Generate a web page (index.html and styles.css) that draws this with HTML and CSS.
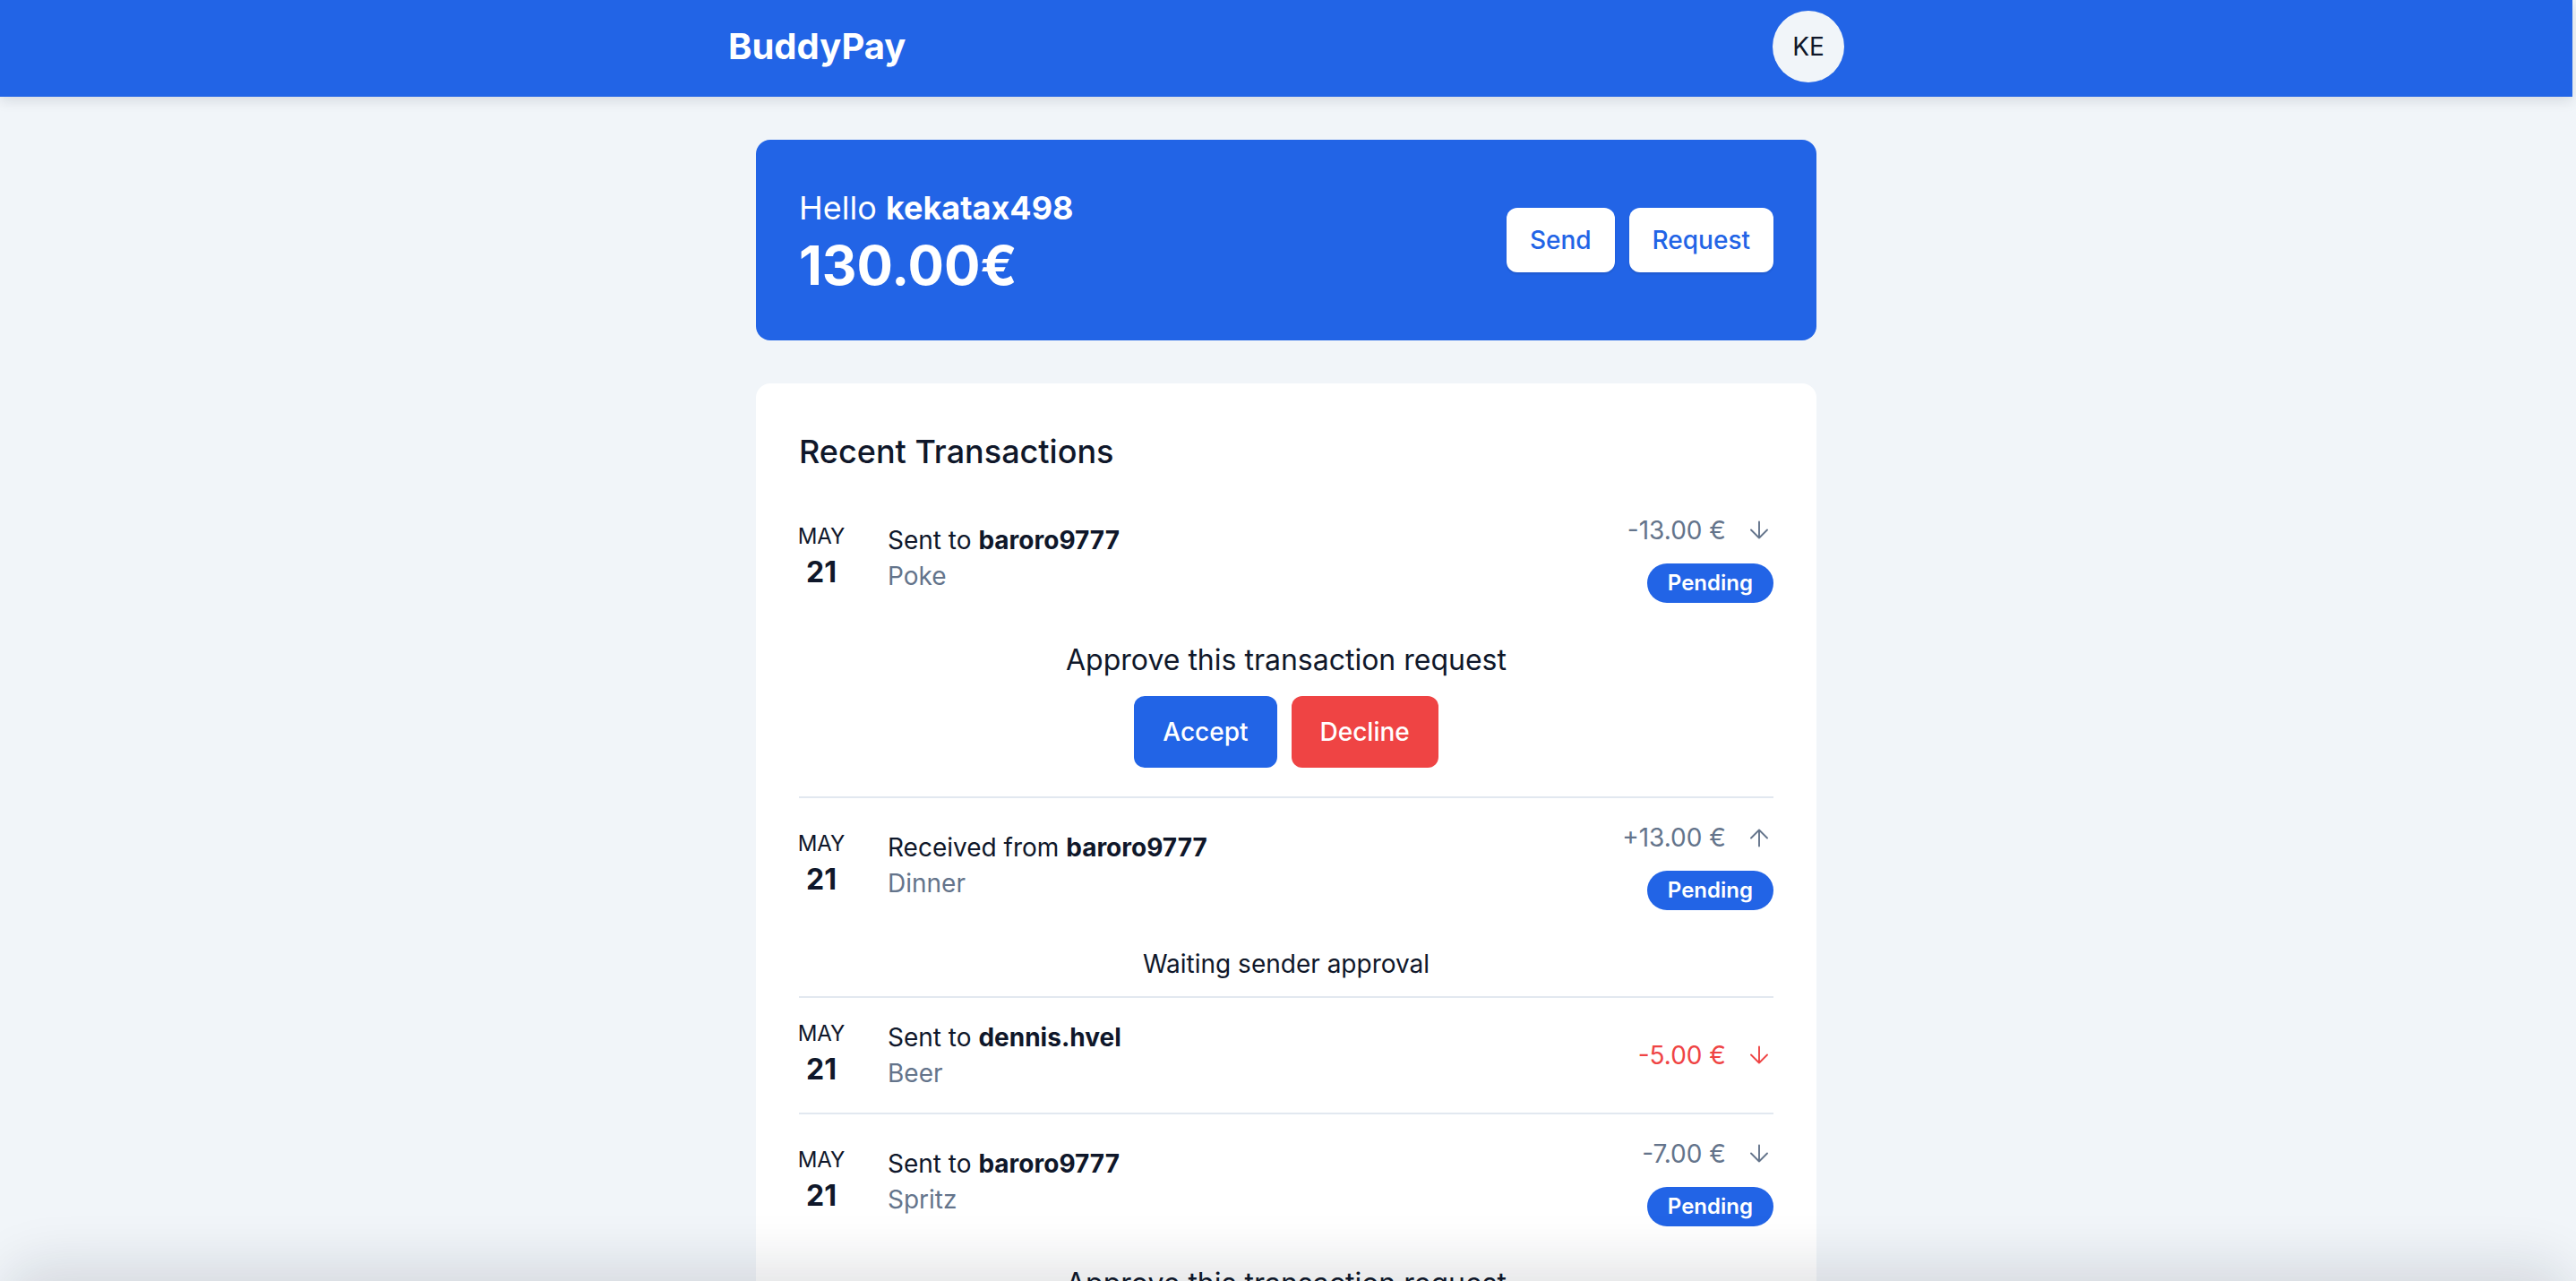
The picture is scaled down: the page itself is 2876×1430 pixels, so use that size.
FILE: index.html
```html
<!DOCTYPE html>
<html lang="en">
<head>
<meta charset="utf-8">
<title>BuddyPay</title>
<link rel="stylesheet" href="styles.css">
</head>
<body>
<header class="topbar">
  <div class="topbar-inner">
    <span class="brand">BuddyPay</span>
    <div class="avatar">KE</div>
  </div>
</header>
<main class="page">
  <section class="balance-card">
    <div class="balance-info">
      <p class="greeting">Hello <strong>kekatax498</strong></p>
      <p class="balance">130.00€</p>
    </div>
    <div class="balance-actions">
      <button class="btn-light">Send</button>
      <button class="btn-light">Request</button>
    </div>
  </section>
  <section class="tx-card">
    <h2 class="tx-title">Recent Transactions</h2>
    <ul class="tx-list">
      <li class="tx">
        <div class="tx-row">
          <div class="tx-date"><span class="tx-month">MAY</span><span class="tx-day">21</span></div>
          <div class="tx-info"><p class="tx-party">Sent to <strong>baroro9777</strong></p><p class="tx-note">Poke</p></div>
          <div class="tx-side">
            <div class="tx-amount">-13.00 €<svg class="arrow" viewBox="0 0 22 22" width="32" height="32"><path d="M11 1.5v18M2 10.5l9 9 9-9"/></svg></div>
            <span class="badge">Pending</span>
          </div>
        </div>
        <div class="tx-approval">
          <p class="approval-title">Approve this transaction request</p>
          <div class="approval-actions"><button class="btn btn-accept">Accept</button><button class="btn btn-decline">Decline</button></div>
        </div>
      </li>
      <li class="tx">
        <div class="tx-row">
          <div class="tx-date"><span class="tx-month">MAY</span><span class="tx-day">21</span></div>
          <div class="tx-info"><p class="tx-party">Received from <strong>baroro9777</strong></p><p class="tx-note">Dinner</p></div>
          <div class="tx-side">
            <div class="tx-amount">+13.00 €<svg class="arrow" viewBox="0 0 22 22" width="32" height="32"><path d="M11 20.5v-18M2 11.5l9-9 9 9"/></svg></div>
            <span class="badge">Pending</span>
          </div>
        </div>
        <div class="tx-approval">
          <p class="approval-note">Waiting sender approval</p>
        </div>
      </li>
      <li class="tx">
        <div class="tx-row">
          <div class="tx-date"><span class="tx-month">MAY</span><span class="tx-day">21</span></div>
          <div class="tx-info"><p class="tx-party">Sent to <strong>dennis.hvel</strong></p><p class="tx-note">Beer</p></div>
          <div class="tx-side">
            <div class="tx-amount tx-amount-red">-5.00 €<svg class="arrow" viewBox="0 0 22 22" width="32" height="32"><path d="M11 1.5v18M2 10.5l9 9 9-9"/></svg></div>
          </div>
        </div>
      </li>
      <li class="tx">
        <div class="tx-row">
          <div class="tx-date"><span class="tx-month">MAY</span><span class="tx-day">21</span></div>
          <div class="tx-info"><p class="tx-party">Sent to <strong>baroro9777</strong></p><p class="tx-note">Spritz</p></div>
          <div class="tx-side">
            <div class="tx-amount">-7.00 €<svg class="arrow" viewBox="0 0 22 22" width="32" height="32"><path d="M11 1.5v18M2 10.5l9 9 9-9"/></svg></div>
            <span class="badge">Pending</span>
          </div>
        </div>
        <div class="tx-approval">
          <p class="approval-title">Approve this transaction request</p>
          <div class="approval-actions"><button class="btn btn-accept">Accept</button><button class="btn btn-decline">Decline</button></div>
        </div>
      </li>
    </ul>
  </section>
</main>
<div class="bottom-shade"></div>
</body>
</html>
```
FILE: styles.css
```css
* {
  box-sizing: border-box;
  margin: 0;
  padding: 0;
}

html, body {
  overflow: hidden;
}

body {
  font-family: Inter, "Noto Sans", "Liberation Sans", sans-serif;
  background: #f1f5f9;
  color: #0f172a;
  height: 1430px;
  padding-right: 4px;
}

.topbar {
  background: #2264e6;
  padding: 12px 0 16px;
  box-shadow: 0 4px 14px rgba(15, 23, 42, 0.12);
  position: relative;
  z-index: 1;
}

.topbar-inner {
  width: 1246px;
  margin: 0 auto;
  display: flex;
  align-items: center;
  justify-content: space-between;
}

.brand {
  color: #ffffff;
  font-size: 40px;
  font-weight: 700;
  line-height: 56px;
}

.avatar {
  width: 80px;
  height: 80px;
  border-radius: 50%;
  background: #f1f5f9;
  display: flex;
  align-items: center;
  justify-content: center;
  font-size: 28px;
  color: #0f172a;
}

.page {
  width: 1184px;
  margin: 0 auto;
  padding-top: 48px;
}

.balance-card {
  background: #2264e6;
  border-radius: 16px;
  padding: 48px;
  display: flex;
  align-items: center;
  justify-content: space-between;
  color: #ffffff;
}

.greeting {
  font-size: 36px;
  line-height: 56px;
}

.greeting strong {
  font-weight: 700;
}

.balance {
  font-size: 60px;
  line-height: 72px;
  font-weight: 700;
}

.balance-actions {
  display: flex;
  gap: 16px;
}

.btn-light {
  background: #ffffff;
  color: #2264e6;
  border: none;
  border-radius: 12px;
  font-family: inherit;
  font-size: 28px;
  line-height: 40px;
  font-weight: 500;
  padding: 16px 26px;
  box-shadow: 0 2px 2px rgba(15, 23, 42, 0.12);
}

.tx-card {
  margin-top: 48px;
  background: #ffffff;
  border-radius: 16px;
  padding: 48px 48px 24px;
}

.tx-title {
  font-size: 36px;
  line-height: 56px;
  font-weight: 500;
  margin-bottom: 16px;
}

.tx-list {
  list-style: none;
}

.tx + .tx {
  border-top: 2px solid #e2e8f0;
}

.tx-row {
  display: flex;
  align-items: center;
  padding: 24px 0;
}

.tx-date {
  width: 50px;
  display: flex;
  flex-direction: column;
  align-items: center;
}

.tx-month {
  font-size: 24px;
  line-height: 32px;
}

.tx-day {
  font-size: 32px;
  line-height: 48px;
  font-weight: 700;
}

.tx-info {
  flex: 1;
  margin-left: 49px;
}

.tx-party {
  font-size: 28px;
  line-height: 40px;
}

.tx-party strong {
  font-weight: 700;
}

.tx-note {
  font-size: 28px;
  line-height: 40px;
  color: #64748b;
}

.tx-side {
  display: flex;
  flex-direction: column;
  align-items: flex-end;
  gap: 17px;
}

.tx-amount {
  display: flex;
  align-items: center;
  font-size: 28px;
  line-height: 40px;
  color: #64748b;
}

.tx-amount-red {
  color: #ef4444;
}

.arrow {
  margin-left: 21px;
  fill: none;
  stroke: currentColor;
  stroke-width: 1.9;
  stroke-linecap: round;
  stroke-linejoin: round;
  padding: 5px;
}

.badge {
  background: #2264e6;
  color: #ffffff;
  font-size: 24px;
  line-height: 32px;
  font-weight: 600;
  padding: 6px 23px;
  border-radius: 999px;
}

.tx-approval {
  text-align: center;
  padding: 16px 0;
}

.approval-title {
  font-size: 32px;
  line-height: 48px;
}

.approval-note {
  font-size: 28px;
  line-height: 40px;
}

.approval-actions {
  display: flex;
  justify-content: center;
  gap: 16px;
  margin: 16px 0;
}

.btn {
  border: none;
  border-radius: 12px;
  color: #ffffff;
  font-family: inherit;
  font-size: 28px;
  line-height: 40px;
  font-weight: 500;
  padding: 20px 32px;
}

.btn-accept {
  background: #2264e6;
}

.btn-decline {
  background: #ef4444;
}

.bottom-shade {
  position: fixed;
  left: 20px;
  right: 20px;
  bottom: -60px;
  height: 60px;
  border-radius: 60px;
  box-shadow: 0 0 60px 20px rgba(15, 23, 42, 0.12);
  z-index: 2;
}
```
